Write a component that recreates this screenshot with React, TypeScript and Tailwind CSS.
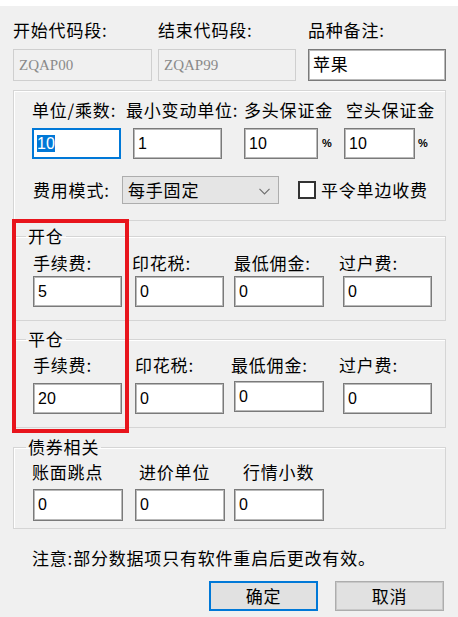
import React from "react";

const cjk = { fontFamily: '"Noto Sans CJK SC", "Noto Sans", sans-serif' };
const num = { fontFamily: '"Liberation Sans", Arial, sans-serif' };
const code = { fontFamily: '"Liberation Serif", "Times New Roman", serif' };

function Field({
  value,
  className = "",
}: {
  value: string;
  className?: string;
}) {
  return (
    <div
      className={`h-[31px] bg-white border border-[#7a7a7a] shadow-[inset_0_0_0_1px_#b9b9b9] pl-[4px] pt-[6px] text-[16px] leading-[18px] text-black ${className}`}
      style={num}
    >
      {value}
    </div>
  );
}

function Label({ text, className = "" }: { text: string; className?: string }) {
  return (
    <div
      className={`h-[20px] text-[17px] leading-[20px] tracking-[0.8px] whitespace-nowrap text-black ${className}`}
    >
      {text}
    </div>
  );
}

function Group({
  title,
  children,
  className = "",
}: {
  title: string;
  children: React.ReactNode;
  className?: string;
}) {
  return (
    <fieldset
      className={`ml-[13px] w-[433px] border border-[#d5d5d5] shadow-[inset_1px_1px_0_#fff] ${className}`}
    >
      <legend className="ml-[12px] px-[2px] text-[17px] leading-[18px] tracking-[0.8px] text-black">
        {title}
      </legend>
      {children}
    </fieldset>
  );
}

export default function App() {
  return (
    <div className="w-[458px] h-[617px] bg-[#f0f0f0] overflow-hidden relative" style={cjk}>
      <div className="h-[6px] bg-white" />

      {/* code range + note */}
      <div className="pt-[14px] pl-[13px] flex">
        <div className="w-[139px]">
          <Label text="开始代码段:" />
          <div
            className="mt-[9px] h-[32px] border border-[#cfcfcf] bg-[#f0f0f0] pl-[5px] pt-[7px] text-[15px] leading-[16px] text-[#8a8a8a]"
            style={code}
          >
            ZQAP00
          </div>
        </div>
        <div className="w-[138px] ml-[6px]">
          <Label text="结束代码段:" />
          <div
            className="mt-[9px] h-[32px] border border-[#cfcfcf] bg-[#f0f0f0] pl-[5px] pt-[7px] text-[15px] leading-[16px] text-[#8a8a8a]"
            style={code}
          >
            ZQAP99
          </div>
        </div>
        <div className="w-[138px] ml-[12px]">
          <Label text="品种备注:" />
          <div className="mt-[9px] h-[32px] border border-[#7a7a7a] shadow-[inset_0_0_0_1px_#b9b9b9] bg-white pl-[4px] pt-[4px] text-[17px] leading-[20px] tracking-[0.8px] text-black">
            苹果
          </div>
        </div>
      </div>

      {/* unit / margins / fee mode */}
      <div className="mt-[9px] ml-[13px] w-[433px] h-[131px] border border-[#d5d5d5] shadow-[inset_1px_1px_0_#fff] pt-[9px] pl-[18px]">
        <div className="flex">
          <Label text="单位/乘数:" className="w-[94px]" />
          <Label text="最小变动单位:" className="w-[118px]" />
          <Label text="多头保证金" className="w-[102px]" />
          <Label text="空头保证金" />
        </div>
        <div className="mt-[8px] flex items-center">
          <div
            className="w-[89px] h-[31px] bg-white border border-[#0078d7] shadow-[inset_0_0_0_1px_#0078d7] pl-[4px] pt-[6px] text-[16px] leading-[18px]"
            style={num}
          >
            <span className="bg-[#0078d7] text-white">10</span>
          </div>
          <Field value="1" className="w-[89px] ml-[12px]" />
          <Field value="10" className="w-[74px] ml-[22px]" />
          <span className="ml-[4px] w-[22px] text-[11px] font-bold" style={num}>
            %
          </span>
          <Field value="10" className="w-[71px]" />
          <span className="ml-[3px] text-[11px] font-bold" style={num}>
            %
          </span>
        </div>
        <div className="mt-[17px] flex items-center">
          <Label text="费用模式:" className="w-[89px] ml-px" />
          <div className="w-[157px] h-[28px] bg-[#e5e5e5] border border-[#adadad] flex items-center pl-[5px] pr-[8px] text-[17px] leading-[20px] tracking-[0.8px]">
            <span className="flex-1">每手固定</span>
            <svg width="11" height="7" viewBox="0 0 11 7" className="mt-[2px]">
              <path d="M0.5 0.8 L5.5 5.8 L10.5 0.8" fill="none" stroke="#707070" strokeWidth="1.2" />
            </svg>
          </div>
          <div className="ml-[19px] w-[18px] h-[18px] bg-white border-[2px] border-[#333]" />
          <Label text="平令单边收费" className="ml-[5px]" />
        </div>
      </div>

      {/* open */}
      <Group title="开仓" className="mt-[6px] pb-[13px]">
        <div className="pt-[8px] pl-[19px] flex">
          <Label text="手续费:" className="w-[99px]" />
          <Label text="印花税:" className="w-[102px]" />
          <Label text="最低佣金:" className="w-[105px]" />
          <Label text="过户费:" />
        </div>
        <div className="mt-[3px] pl-[19px] flex">
          <Field value="5" className="w-[89px]" />
          <Field value="0" className="w-[89px] ml-[13px]" />
          <Field value="0" className="w-[90px] ml-[10px]" />
          <Field value="0" className="w-[89px] ml-[19px]" />
        </div>
      </Group>

      {/* close */}
      <Group title="平仓" className="mt-[9px] pb-[13px]">
        <div className="pt-[7px] pl-[19px] flex">
          <Label text="手续费:" className="w-[102px]" />
          <Label text="印花税:" className="w-[96px]" />
          <Label text="最低佣金:" className="w-[108px]" />
          <Label text="过户费:" />
        </div>
        <div className="mt-[8px] pl-[19px] flex items-start">
          <Field value="20" className="w-[89px]" />
          <Field value="0" className="w-[89px] ml-[13px]" />
          <Field value="0" className="w-[90px] ml-[10px] -mt-[2px]" />
          <Field value="0" className="w-[89px] ml-[19px]" />
        </div>
      </Group>

      {/* bond */}
      <Group title="债券相关" className="mt-[10px] pb-[7px]">
        <div className="pt-[6px] pl-[18px] flex">
          <Label text="账面跳点" className="w-[107px]" />
          <Label text="进价单位" className="w-[104px]" />
          <Label text="行情小数" />
        </div>
        <div className="mt-[7px] pl-[19px] flex">
          <Field value="0" className="w-[90px] h-[32px]" />
          <Field value="0" className="w-[90px] h-[32px] ml-[12px]" />
          <Field value="0" className="w-[90px] h-[32px] ml-[9px]" />
        </div>
      </Group>

      <Label text="注意:部分数据项只有软件重启后更改有效。" className="mt-[19px] ml-[32px]" />

      <div className="mt-[13px] flex">
        <button className="ml-[209px] w-[109px] h-[30px] bg-[#e1e1e1] border-[2px] border-[#0078d7] text-[17px] leading-[20px] tracking-[0.8px] text-black">
          确定
        </button>
        <button className="ml-[17px] w-[109px] h-[30px] bg-[#e1e1e1] border border-[#adadad] shadow-[inset_0_0_0_1px_#c8c8c8] text-[17px] leading-[20px] tracking-[0.8px] text-black">
          取消
        </button>
      </div>

      {/* red annotation frame */}
      <div className="absolute left-[12px] top-[219px] w-[117px] h-[214px] border-[4px] border-[#e8141c] pointer-events-none" />
    </div>
  );
}
